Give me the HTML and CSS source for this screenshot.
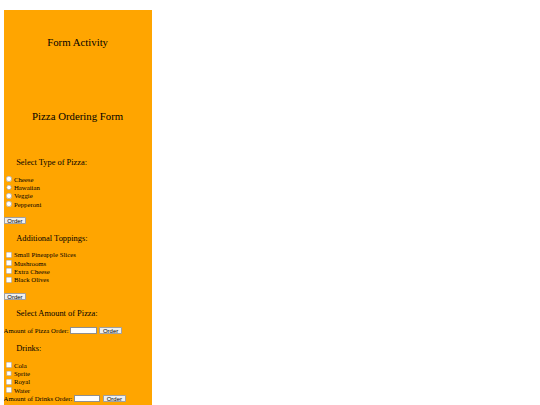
FILE: index.html
```html
<!DOCTYPE html>
<html lang="en">
<head>
<meta charset="utf-8">
<title>Form Activity</title>
<link rel="stylesheet" href="styles.css">
</head>
<body>
<div class="card">
  <h2 class="title">Form Activity</h2>
  <h2 class="title title-form">Pizza Ordering Form</h2>
  <form class="order-form">
    <h3 class="section section-first">Select Type of Pizza:</h3>
    <div class="option"><input type="radio" name="pizza" id="p1"><label for="p1">Cheese</label></div>
    <div class="option"><input type="radio" name="pizza" id="p2"><label for="p2">Hawaiian</label></div>
    <div class="option"><input type="radio" name="pizza" id="p3"><label for="p3">Veggie</label></div>
    <div class="option"><input type="radio" name="pizza" id="p4"><label for="p4">Pepperoni</label></div>
    <div class="actions"><button type="button" class="btn">Order</button></div>

    <h3 class="section">Additional Toppings:</h3>
    <div class="option"><input type="checkbox" id="t1"><label for="t1">Small Pineapple Slices</label></div>
    <div class="option"><input type="checkbox" id="t2"><label for="t2">Mushrooms</label></div>
    <div class="option"><input type="checkbox" id="t3"><label for="t3">Extra Cheese</label></div>
    <div class="option"><input type="checkbox" id="t4"><label for="t4">Black Olives</label></div>
    <div class="actions"><button type="button" class="btn">Order</button></div>

    <h3 class="section">Select Amount of Pizza:</h3>
    <div class="qty-row"><label for="q1">Amount of Pizza Order:</label><input type="text" id="q1" class="qty"><button type="button" class="btn">Order</button></div>

    <h3 class="section">Drinks:</h3>
    <div class="option"><input type="checkbox" id="d1"><label for="d1">Cola</label></div>
    <div class="option"><input type="checkbox" id="d2"><label for="d2">Sprite</label></div>
    <div class="option"><input type="checkbox" id="d3"><label for="d3">Royal</label></div>
    <div class="option"><input type="checkbox" id="d4"><label for="d4">Water</label></div>
    <div class="qty-row"><label for="q2">Amount of Drinks Order:</label><input type="text" id="q2" class="qty"><button type="button" class="btn">Order</button></div>
  </form>
</div>
</body>
</html>
```

FILE: styles.css
```css
html {
  zoom: 0.45;
}

body {
  margin: 22px 8px 8px;
  font-family: "Liberation Serif", "Times New Roman", serif;
  font-size: 16px;
  color: #000;
  background: #fff;
}

.card {
  width: 329px;
  background: #ffa500;
  padding-top: 58px;
  padding-bottom: 20px;
}

.title {
  margin: 0;
  text-align: center;
  font-size: 24px;
  line-height: 27.6px;
  font-weight: normal;
}

.title-form {
  margin-top: 137.5px;
}

.order-form {
  margin: 0;
}

.section {
  margin: 21px 0 16.7px;
  padding-left: 28px;
  font-size: 18.72px;
  line-height: 21px;
  font-weight: normal;
}

.section-first {
  margin-top: 78.5px;
}

.option {
  display: flex;
  align-items: center;
  height: 18.5px;
  font-size: 15px;
}

.option input {
  width: 13px;
  height: 13px;
  margin: 0 5px 0 5px;
}

.actions {
  display: flex;
  align-items: center;
  height: 15.5px;
  margin-top: 20px;
}

.qty-row {
  display: flex;
  align-items: center;
  height: 18.7px;
  font-size: 15px;
  white-space: nowrap;
}

.qty-row label {
  margin-right: 4px;
}

.btn {
  box-sizing: border-box;
  height: 16px;
  margin: 0;
  padding: 0 6px;
  font-family: "Liberation Sans", Arial, sans-serif;
  font-size: 13.33px;
  line-height: 14px;
  color: #000;
  background: #efefef;
  border: 1px solid #a0a0a0;
  border-radius: 2px;
}

.qty {
  box-sizing: border-box;
  width: 58px;
  height: 16px;
  margin: 0 6px 0 0;
  padding: 0 2px;
  background: #fff;
  border: 1px solid #8f8f8f;
  border-radius: 0;
}
```
